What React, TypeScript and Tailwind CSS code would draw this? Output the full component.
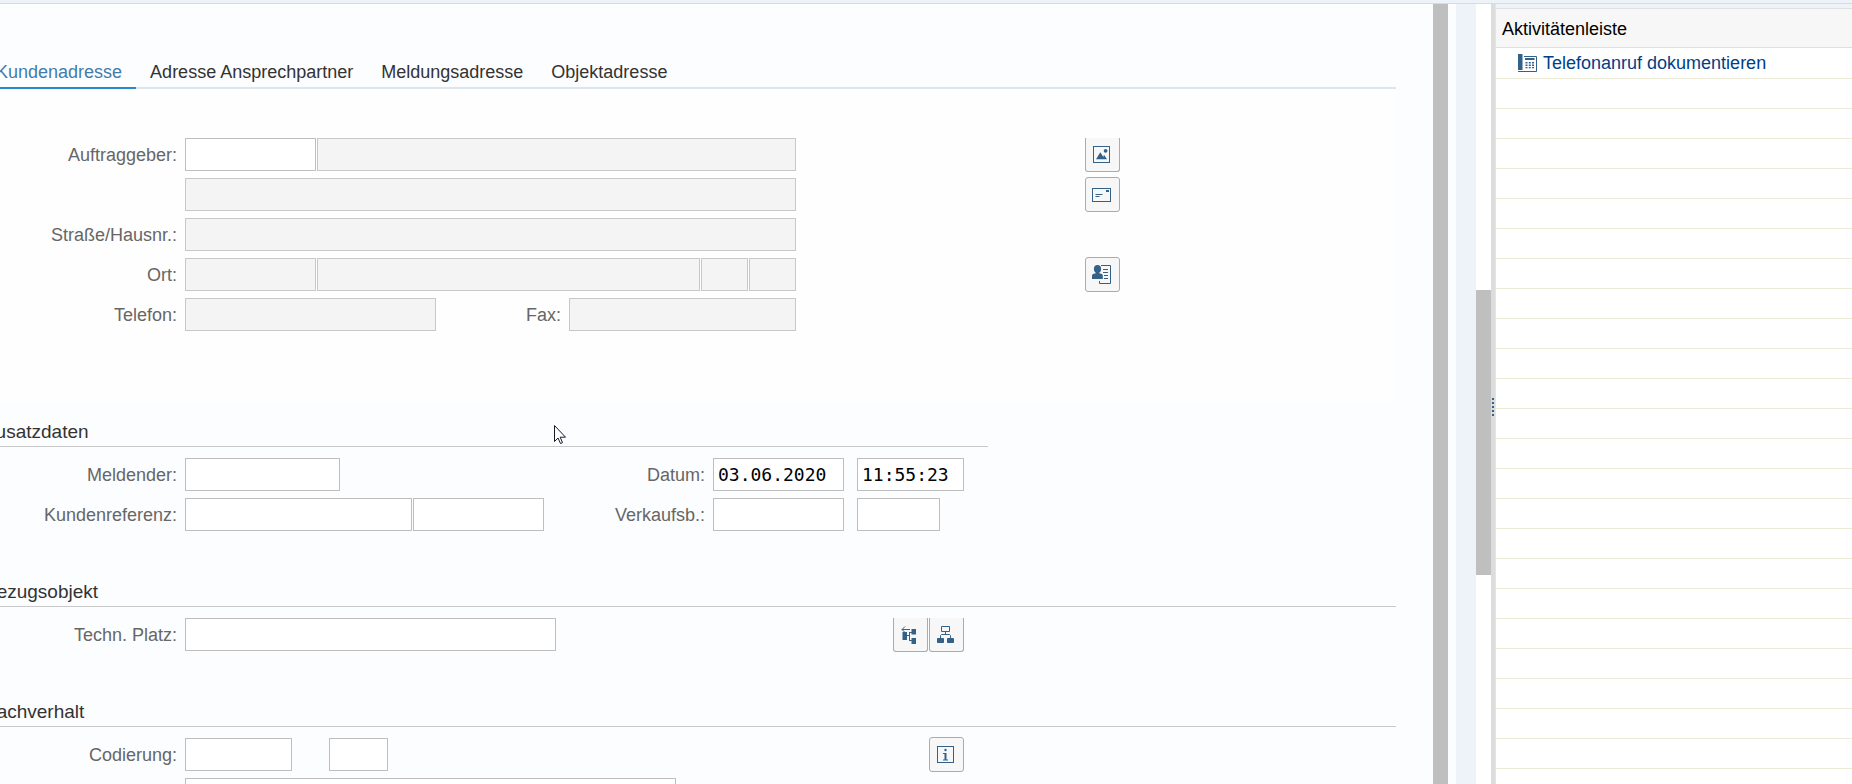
import { useState, type ReactNode } from "react";
import { clsx } from "clsx";

const TABS = [
  "Kundenadresse",
  "Adresse Ansprechpartner",
  "Meldungsadresse",
  "Objektadresse",
];

const EMPTY_ROWS = 26;

interface FieldProps {
  id: string;
  className: string;
  label?: string;
  value?: string;
  readOnly?: boolean;
}

function Field({ id, className, label, value, readOnly }: FieldProps) {
  return (
    <input
      id={id}
      type="text"
      aria-label={label}
      defaultValue={value}
      readOnly={readOnly}
      className={clsx(
        "h-[33px] shrink-0 border px-1 font-['Lucida_Console','DejaVu_Sans_Mono',monospace] text-lg text-black outline-none",
        readOnly ? "border-[#c8c8c8] bg-[#f4f4f4]" : "border-[#bebebe] bg-white",
        className,
      )}
    />
  );
}

interface LabelProps {
  htmlFor: string;
  className?: string;
  children: ReactNode;
}

function Label({ htmlFor, className = "w-[205px]", children }: LabelProps) {
  return (
    <label
      htmlFor={htmlFor}
      className={clsx("shrink-0 pr-2 text-right text-[#666666]", className)}
    >
      {children}
    </label>
  );
}

function Row({ children }: { children: ReactNode }) {
  return <div className="flex h-[35px] items-center">{children}</div>;
}

interface IconButtonProps {
  label: string;
  className?: string;
  flatTop?: boolean;
  children: ReactNode;
}

function IconButton({ label, className, flatTop, children }: IconButtonProps) {
  return (
    <button
      type="button"
      aria-label={label}
      className={clsx(
        "flex w-[35px] shrink-0 items-center justify-center border-[#ababab] bg-[#f7f7f7] pr-0.5 text-[#346187]",
        flatTop
          ? "h-[34px] self-end rounded-b-[3px] border-x border-b"
          : "h-[35px] rounded-[3px] border",
        className,
      )}
    >
      {children}
    </button>
  );
}

function PictureIcon() {
  return (
    <svg width="17" height="17" viewBox="0 0 17 17" fill="currentColor">
      <rect x="0.5" y="0.5" width="16" height="16" fill="none" stroke="currentColor" />
      <path d="M3 13.3 7.3 6.3l3 4.6L11 8.8l3 4.5z" />
      <circle cx="12.6" cy="4.8" r="1.9" />
    </svg>
  );
}

function CardIcon() {
  return (
    <svg width="19" height="14" viewBox="0 0 19 14" fill="currentColor">
      <rect x="0.5" y="0.5" width="18" height="13" fill="none" stroke="currentColor" />
      <path d="M14 2h3v2h-3zM3.5 6h7v1h-7zM3.5 8h4v1h-4z" />
    </svg>
  );
}

function PartnerIcon() {
  return (
    <svg width="19" height="19" viewBox="0 0 19 19" fill="currentColor">
      <ellipse cx="5.5" cy="4" rx="3.6" ry="4" />
      <path d="M3.8 6h3.4v2.2l2.6.9q1 .5 1 1.7V14H0v-3.2Q0 9.6 1 9.1l2.8-.9z" />
      <path d="M9 .5h9.5v18h-11V16M11 4.500h5M11 7.500h5M12 10.500h4M12 13.500h4" fill="none" stroke="currentColor" />
    </svg>
  );
}

function StructureListIcon() {
  return (
    <svg width="17" height="18" viewBox="0 0 17 18" fill="currentColor">
      <path d="M1.500 6H6v8H1.500zM10.500 3H15v5.500h-4.500zM10.500 12H15v6h-4.500z" />
      <path d="M1 3.500h8M4 .5l-3 3 3 3M6 9.500h2.500M8.500 6v9M8.500 6.500H11M8.500 14.500H11" fill="none" stroke="currentColor" />
    </svg>
  );
}

function HierarchyIcon() {
  return (
    <svg width="17" height="17" viewBox="0 0 17 17" fill="currentColor">
      <path d="M4.5.5h8v5h-8zM8.500 5.500v3M3.500 12V9.500l1-1h8l1 1V12" fill="none" stroke="currentColor" />
      <rect x="0" y="12" width="7" height="5" rx="0.8" />
      <rect x="10" y="12" width="7" height="5" rx="0.8" />
    </svg>
  );
}

function InfoIcon() {
  return (
    <svg width="17" height="17" viewBox="0 0 17 17" fill="currentColor">
      <rect x="0.5" y="0.5" width="16" height="16" fill="none" stroke="currentColor" />
      <circle cx="8.5" cy="4" r="1.2" />
      <path d="M6 7h3.500v6.500H11v1H6v-1h1.500V8H6z" />
    </svg>
  );
}

function PhoneIcon() {
  return (
    <svg width="19" height="18" viewBox="0 0 19 18" fill="currentColor" className="text-[#346187]">
      <rect x="0" y="0" width="4.5" height="16" />
      <path d="M6 2.500h12.500v15H0" fill="none" stroke="currentColor" />
      <path d="M7 4h9.500v2H7zM7.500 8h2v1.500h-2zM10.800 8h2v1.500h-2zM14 8h2v1.500h-2zM7.500 10.500h2V12h-2zM10.800 10.500h2V12h-2zM14 10.500h2V12h-2zM7.500 13h2v1.200h-2zM10.800 13h2v1.200h-2zM14 13h2v1.200h-2z" />
    </svg>
  );
}

interface SectionProps {
  title: string;
  headingClassName?: string;
  children: ReactNode;
}

function Section({ title, headingClassName, children }: SectionProps) {
  return (
    <section>
      <h2
        className={clsx(
          "mb-[10px] border-b border-[#c9c9c9] pt-[3px] pb-0.5 pl-1 text-[19px] leading-6 text-[#333333]",
          headingClassName,
        )}
      >
        {title}
      </h2>
      <div className="flex flex-col gap-[5px]">{children}</div>
    </section>
  );
}

function AddressForm() {
  return (
    <div className="flex h-[315px] flex-col gap-[5px] bg-[#fefefe] pt-12">
      <Row>
        <Label htmlFor="auftraggeber">Auftraggeber:</Label>
        <Field id="auftraggeber" className="w-[131px]" />
        <Field id="auftraggeber-name" label="Name" className="ml-px w-[479px]" readOnly />
        <IconButton label="Bild" className="ml-[289px]" flatTop>
          <PictureIcon />
        </IconButton>
      </Row>
      <Row>
        <Field id="name-2" label="Name 2" className="ml-[205px] w-[611px]" readOnly />
        <IconButton label="Adresse" className="ml-[289px]">
          <CardIcon />
        </IconButton>
      </Row>
      <Row>
        <Label htmlFor="strasse">Straße/Hausnr.:</Label>
        <Field id="strasse" className="w-[611px]" readOnly />
      </Row>
      <Row>
        <Label htmlFor="plz">Ort:</Label>
        <Field id="plz" className="w-[131px]" readOnly />
        <Field id="ort" label="Ort" className="ml-px w-[383px]" readOnly />
        <Field id="land" label="Land" className="ml-px w-[47px]" readOnly />
        <Field id="region" label="Region" className="ml-px w-[47px]" readOnly />
        <IconButton label="Partner" className="ml-[289px]">
          <PartnerIcon />
        </IconButton>
      </Row>
      <Row>
        <Label htmlFor="telefon">Telefon:</Label>
        <Field id="telefon" className="w-[251px]" readOnly />
        <Label htmlFor="fax" className="w-[133px]">Fax:</Label>
        <Field id="fax" className="w-[227px]" readOnly />
      </Row>
    </div>
  );
}

function ActivityPanel() {
  return (
    <aside className="flex w-[356px] shrink-0 flex-col overflow-hidden bg-white">
      <div className="h-1 shrink-0 bg-[#edf3f8]" />
      <h2 className="h-10 shrink-0 border-y border-[#e0e0e0] bg-[#f7f7f7] pt-2 pl-1.5 leading-6 text-black">
        Aktivitätenleiste
      </h2>
      <ul>
        <li className="flex h-[31px] items-center border-b border-[#ebebd8] pl-[22px]">
          <a href="#telefonanruf" className="flex items-center gap-[6px] leading-6 text-[#003e87]">
            <PhoneIcon />
            Telefonanruf dokumentieren
          </a>
        </li>
        {Array.from({ length: EMPTY_ROWS }, (_, index) => (
          <li key={index} className="h-[30px] border-b border-[#ebebd8]" />
        ))}
      </ul>
    </aside>
  );
}

function Splitter() {
  return (
    <div className="flex w-[5px] shrink-0 flex-col gap-0.5 border-r border-[#e4e4e4] bg-[#dcdcdc] pt-[394px] pl-px">
      {[0, 1, 2, 3, 4].map((dot) => (
        <span key={dot} className="size-0.5 bg-[#346187]" />
      ))}
    </div>
  );
}

export default function App() {
  const [activeTab, setActiveTab] = useState(TABS[0]);

  return (
    <div className="flex h-screen flex-col overflow-hidden bg-[#fcfdff] font-['Liberation_Sans',Arial,sans-serif] text-lg leading-6">
      <header className="h-1 shrink-0 border-b border-[#d0dde9] bg-[#edf3f8]" />
      <div className="flex min-h-0 flex-1">
        <main className="min-w-0 flex-1 overflow-hidden pr-[37px]">
          {/* the form is scrolled slightly to the right */}
          <div className="-ml-5">
            <div role="tablist" className="flex border-b-2 border-[#dae5f0] pt-14 pl-0.5">
              {TABS.map((tab) => (
                <button
                  key={tab}
                  type="button"
                  role="tab"
                  aria-selected={tab === activeTab}
                  onClick={() => setActiveTab(tab)}
                  className={clsx(
                    "-mb-0.5 border-b-2 px-[14px] pb-[3px]",
                    tab === activeTab
                      ? "border-[#268bc8] text-[#427cac]"
                      : "border-transparent text-[#333333]",
                  )}
                >
                  {tab}
                </button>
              ))}
            </div>
            <AddressForm />

            <div className="flex flex-col gap-[45px] pt-[13px]">
              <Section title="Zusatzdaten" headingClassName="mr-[408px]">
                <Row>
                  <Label htmlFor="meldender">Meldender:</Label>
                  <Field id="meldender" className="w-[155px]" />
                  <Label htmlFor="datum" className="w-[373px]">Datum:</Label>
                  <Field id="datum" className="w-[131px]" value="03.06.2020" />
                  <Field id="uhrzeit" label="Uhrzeit" className="ml-[13px] w-[107px]" value="11:55:23" />
                </Row>
                <Row>
                  <Label htmlFor="kundenreferenz">Kundenreferenz:</Label>
                  <Field id="kundenreferenz" className="w-[227px]" />
                  <Field id="referenzdatum" label="Referenzdatum" className="ml-px w-[131px]" />
                  <Label htmlFor="verkaufsb" className="w-[169px]">Verkaufsb.:</Label>
                  <Field id="verkaufsb" className="w-[131px]" />
                  <Field id="position" label="Position" className="ml-[13px] w-[83px]" />
                </Row>
              </Section>

              <Section title="Bezugsobjekt">
                <Row>
                  <Label htmlFor="platz">Techn. Platz:</Label>
                  <Field id="platz" className="w-[371px]" />
                  <IconButton label="Strukturliste" className="ml-[337px]" flatTop>
                    <StructureListIcon />
                  </IconButton>
                  <IconButton label="Hierarchie" className="ml-px" flatTop>
                    <HierarchyIcon />
                  </IconButton>
                </Row>
              </Section>

              <Section title="Sachverhalt">
                <Row>
                  <Label htmlFor="codierung">Codierung:</Label>
                  <Field id="codierung" className="w-[107px]" />
                  <Field id="code" label="Code" className="ml-[37px] w-[59px]" />
                  <IconButton label="Information" className="ml-[541px]">
                    <InfoIcon />
                  </IconButton>
                </Row>
                <Row>
                  <Field id="beschreibung" label="Beschreibung" className="ml-[205px] w-[491px]" />
                </Row>
              </Section>
            </div>
          </div>
        </main>

        <div className="w-[15px] shrink-0 bg-[#bfbfbf]" />
        <div className="ml-2 w-5 shrink-0 bg-[#edf3f8]" />
        <div className="w-[15px] shrink-0 bg-white pt-[286px]">
          <div className="h-[285px] bg-[#bfbfbf]" />
        </div>
        <Splitter />
        <ActivityPanel />
      </div>

      <svg
        className="pointer-events-none absolute top-[425px] left-[554px]"
        width="13"
        height="20"
        viewBox="0 0 13 20"
        fill="white"
        stroke="#1a1a2a"
      >
        <path d="M.5.5v16l3.500-3.500 2.500 5.500 2-.8L6.200 12.200H11.500z" />
      </svg>
    </div>
  );
}
